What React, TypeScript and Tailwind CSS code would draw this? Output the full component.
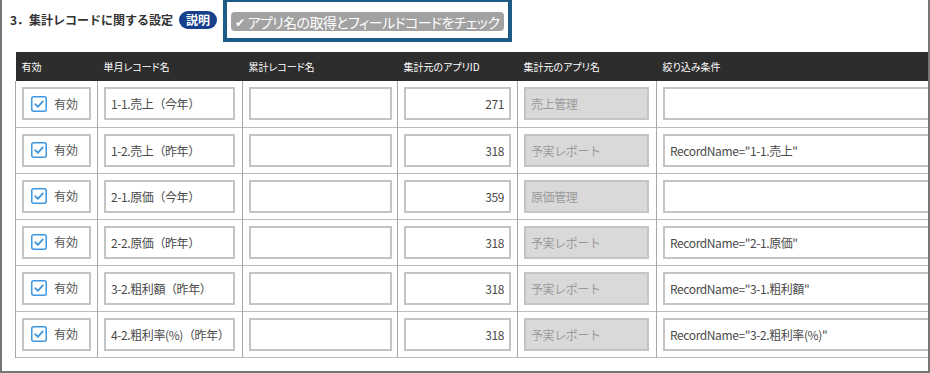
import { ReactNode } from "react";

type Row = {
  month: string;
  total: string;
  appId: string;
  appName: string;
  filter: string;
};

const rows: Row[] = [
  { month: "1-1.売上（今年）", total: "", appId: "271", appName: "売上管理", filter: "" },
  { month: "1-2.売上（昨年）", total: "", appId: "318", appName: "予実レポート", filter: 'RecordName="1-1.売上"' },
  { month: "2-1.原価（今年）", total: "", appId: "359", appName: "原価管理", filter: "" },
  { month: "2-2.原価（昨年）", total: "", appId: "318", appName: "予実レポート", filter: 'RecordName="2-1.原価"' },
  { month: "3-2.粗利額（昨年）", total: "", appId: "318", appName: "予実レポート", filter: 'RecordName="3-1.粗利額"' },
  { month: "4-2.粗利率(%)（昨年）", total: "", appId: "318", appName: "予実レポート", filter: 'RecordName="3-2.粗利率(%)"' },
];

const font = "font-['Noto_Sans_CJK_JP','Noto_Sans',sans-serif]";

//pieces
const CheckMark = (): ReactNode => (
  <svg width="16" height="16" viewBox="0 0 16 16">
    <rect x="0.75" y="0.75" width="14.5" height="14.5" rx="2" fill="#fff" stroke="#3d97e0" strokeWidth="1.5" />
    <path d="M4.2 8.2 L6.9 10.8 L11.8 5.4" fill="none" stroke="#3d97e0" strokeWidth="1.8" strokeLinecap="round" strokeLinejoin="round" />
  </svg>
);

const Field = ({ value, align = "left", disabled = false }: { value: string; align?: "left" | "right"; disabled?: boolean }): ReactNode => (
  <input
    readOnly
    value={value}
    className={
      "block h-[33px] w-full border-2 border-[#c4c4c4] px-[5px] text-[12px] tracking-[-0.4px] outline-none " +
      (align === "right" ? "text-right " : "text-left ") +
      (disabled ? "bg-[#d9d9d9] text-[#9a9a9a]" : "bg-white text-[#4a4a4a]")
    }
  />
);

const App = (): ReactNode => {
  return (
    <div className={`w-[930px] h-[373px] overflow-hidden bg-white border-x-2 border-b-2 border-[#767676] ${font}`}>
      <div className="flex h-[42px] items-start">
        <div className="flex items-center pl-[8px] pt-[11px]">
          <span className="text-[12px] font-bold text-[#333]">3．集計レコードに関する設定</span>
          <span className="ml-[6px] rounded-full bg-[#17408c] px-[7px] py-[1px] text-[12px] font-bold leading-[16px] text-white">
            説明
          </span>
        </div>
        <div className="ml-[6px] -mt-[2px] h-[44px] border-[4px] border-[#1d5c86] bg-white px-[4px] pt-[10px]">
          <div className="flex h-[19px] items-center rounded-[4px] bg-[#a2a2a2] pl-[4px] pr-[5px] text-[14px] leading-none tracking-[-0.6px] text-white [font-feature-settings:'palt']">
            <span className="mr-[3px] text-[12px]">✔</span>
            アプリ名の取得とフィールドコードをチェック
          </div>
        </div>
      </div>

      <table className="ml-[13px] mt-[10px] w-[1000px] table-fixed border-collapse">
        <colgroup>
          <col className="w-[82px]" />
          <col className="w-[145px]" />
          <col className="w-[155px]" />
          <col className="w-[120px]" />
          <col className="w-[139px]" />
          <col className="w-[359px]" />
        </colgroup>
        <thead>
          <tr className="h-[29px] bg-[#2d2d2d] text-left text-[10px] text-white [font-feature-settings:'palt']">
            <th className="px-[6px] font-normal">有効</th>
            <th className="px-[6px] font-normal">単月レコード名</th>
            <th className="px-[6px] font-normal">累計レコード名</th>
            <th className="px-[6px] font-normal">集計元のアプリID</th>
            <th className="px-[6px] font-normal">集計元のアプリ名</th>
            <th className="px-[6px] font-normal">絞り込み条件</th>
          </tr>
        </thead>
        <tbody>
          {rows.map((r, i) => (
            <tr key={i} className="h-[46px] border-b border-[#bdbdbd]">
              <td className="border-x border-[#a8a8a8] px-[6px]">
                <div className="flex h-[33px] items-center border-2 border-[#c4c4c4] pl-[7px]">
                  <CheckMark />
                  <span className="ml-[7px] text-[12px] text-[#555]">有効</span>
                </div>
              </td>
              <td className="border-r border-[#a8a8a8] pl-[6px] pr-[7px]">
                <Field value={r.month} />
              </td>
              <td className="border-r border-[#a8a8a8] pl-[6px] pr-[5px]">
                <Field value={r.total} />
              </td>
              <td className="border-r border-[#a8a8a8] px-[6px]">
                <Field value={r.appId} align="right" />
              </td>
              <td className="border-r border-[#a8a8a8] pl-[6px] pr-[7px]">
                <Field value={r.appName} disabled />
              </td>
              <td className="pl-[6px]">
                <Field value={r.filter} />
              </td>
            </tr>
          ))}
        </tbody>
      </table>
    </div>
  );
};

export default App;
